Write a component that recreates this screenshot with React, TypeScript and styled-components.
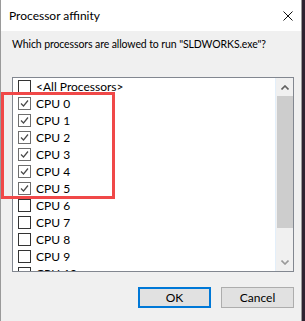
import React, { useState } from 'react'
import styled, { createGlobalStyle } from 'styled-components'

const GlobalStyle = createGlobalStyle`
  html, body {
    margin: 0;
    padding: 0;
    background: #2e2230;
  }
  body {
    font-family: Lato, "Liberation Sans", sans-serif;
    font-size: 12px;
    color: #000;
  }
`

const Window = styled.div`
  position: relative;
  width: 300px;
  height: 321px;
  border-left: 1px solid #9a9a9a;
  border-right: 1px solid #9a9a9a;
  background: #f0f0f0;
  display: flex;
  flex-direction: column;
`

const TitleBar = styled.div`
  height: 31px;
  background: #fff;
  display: flex;
  align-items: center;
  justify-content: space-between;
  padding: 0 7px 0 8px;
`

const Title = styled.div`
  font-size: 12px;
  line-height: 16px;
`

const CloseIcon = styled.svg`
  width: 10px;
  height: 10px;
  margin-right: 1px;
`

const Body = styled.div`
  flex: 1;
  display: flex;
  flex-direction: column;
  padding: 5px 7px 0 11px;
`

const Prompt = styled.div`
  font-size: 10.5px;
  letter-spacing: -0.1px;
  line-height: 16px;
  margin-bottom: 25px;
  white-space: nowrap;
`

const ListBox = styled.div`
  height: 193px;
  border: 1px solid #828790;
  background: #fff;
  display: flex;
  overflow: hidden;
`

const Items = styled.div`
  flex: 1;
  overflow: hidden;
`

const Row = styled.div`
  height: 17px;
  display: flex;
  align-items: center;
  gap: 5px;
  padding-left: 5px;
  white-space: nowrap;
`

const Box = styled.span<{ $checked: boolean }>`
  width: 11px;
  height: 11px;
  flex: none;
  border: 1px solid ${p => (p.$checked ? '#6e6e6e' : '#333')};
  background: #fff;
  display: flex;
  align-items: center;
  justify-content: center;
`

const ScrollBar = styled.div`
  width: 17px;
  border-left: 1px solid #e3effa;
  background: #f0f0f0;
  display: flex;
  flex-direction: column;
`

const ArrowButton = styled.div`
  height: 18px;
  display: flex;
  align-items: center;
  justify-content: center;
`

const Track = styled.div`
  flex: 1;
  display: flex;
  flex-direction: column;
  padding: 0 0 0 1px;
`

const Thumb = styled.div`
  height: 132px;
  background: #cdcdcd;
`

const Buttons = styled.div`
  display: flex;
  justify-content: flex-end;
  gap: 10px;
  margin-top: 15px;
`

const Button = styled.button<{ $default?: boolean }>`
  width: 73px;
  height: 21px;
  padding: 0;
  font: inherit;
  color: #000;
  background: #e1e1e1;
  border: ${p => (p.$default ? '2px solid #0078d7' : '1px solid #adadad')};
`

const Highlight = styled.div`
  position: absolute;
  left: 0;
  top: 92px;
  width: 108px;
  height: 101px;
  border: 3px solid #f04848;
  pointer-events: none;
`

const Check = () => (
  <svg width="9" height="9" viewBox="0 0 9 9">
    <path d="M1 4.5 L3.5 7 L8 1.5" fill="none" stroke="#4a4a4a" strokeWidth="1.2" />
  </svg>
)

const Chevron = ({ up, color }: { up: boolean; color: string }) => (
  <svg width="8" height="5" viewBox="0 0 8 5">
    <path
      d={up ? 'M0.5 4.5 L4 1 L7.5 4.5' : 'M0.5 0.5 L4 4 L7.5 0.5'}
      fill="none"
      stroke={color}
      strokeWidth="1.6"
    />
  </svg>
)

export default function App() {
  const [checked, setChecked] = useState<boolean[]>(
    Array.from({ length: 12 }, (_, i) => i < 6),
  )

  const toggle = (i: number) =>
    setChecked(c => c.map((v, j) => (j === i ? !v : v)))

  return (
    <>
      <GlobalStyle />
      <Window>
        <TitleBar>
          <Title>Processor affinity</Title>
          <CloseIcon viewBox="0 0 10 10">
            <path d="M0.5 0.5 L9.5 9.5 M9.5 0.5 L0.5 9.5" stroke="#111" strokeWidth="1" />
          </CloseIcon>
        </TitleBar>
        <Body>
          <Prompt>Which processors are allowed to run "SLDWORKS.exe"?</Prompt>
          <ListBox>
            <Items>
              <Row>
                <Box $checked={false} />
                {'<All Processors>'}
              </Row>
              {checked.map((c, i) => (
                <Row key={i} onClick={() => toggle(i)}>
                  <Box $checked={c}>{c && <Check />}</Box>
                  CPU {i}
                </Row>
              ))}
            </Items>
            <ScrollBar>
              <ArrowButton>
                <Chevron up color="#606060" />
              </ArrowButton>
              <Track>
                <Thumb />
              </Track>
              <ArrowButton>
                <Chevron up={false} color="#9a9a9a" />
              </ArrowButton>
            </ScrollBar>
          </ListBox>
          <Buttons>
            <Button $default>OK</Button>
            <Button>Cancel</Button>
          </Buttons>
        </Body>
        <Highlight />
      </Window>
    </>
  )
}
